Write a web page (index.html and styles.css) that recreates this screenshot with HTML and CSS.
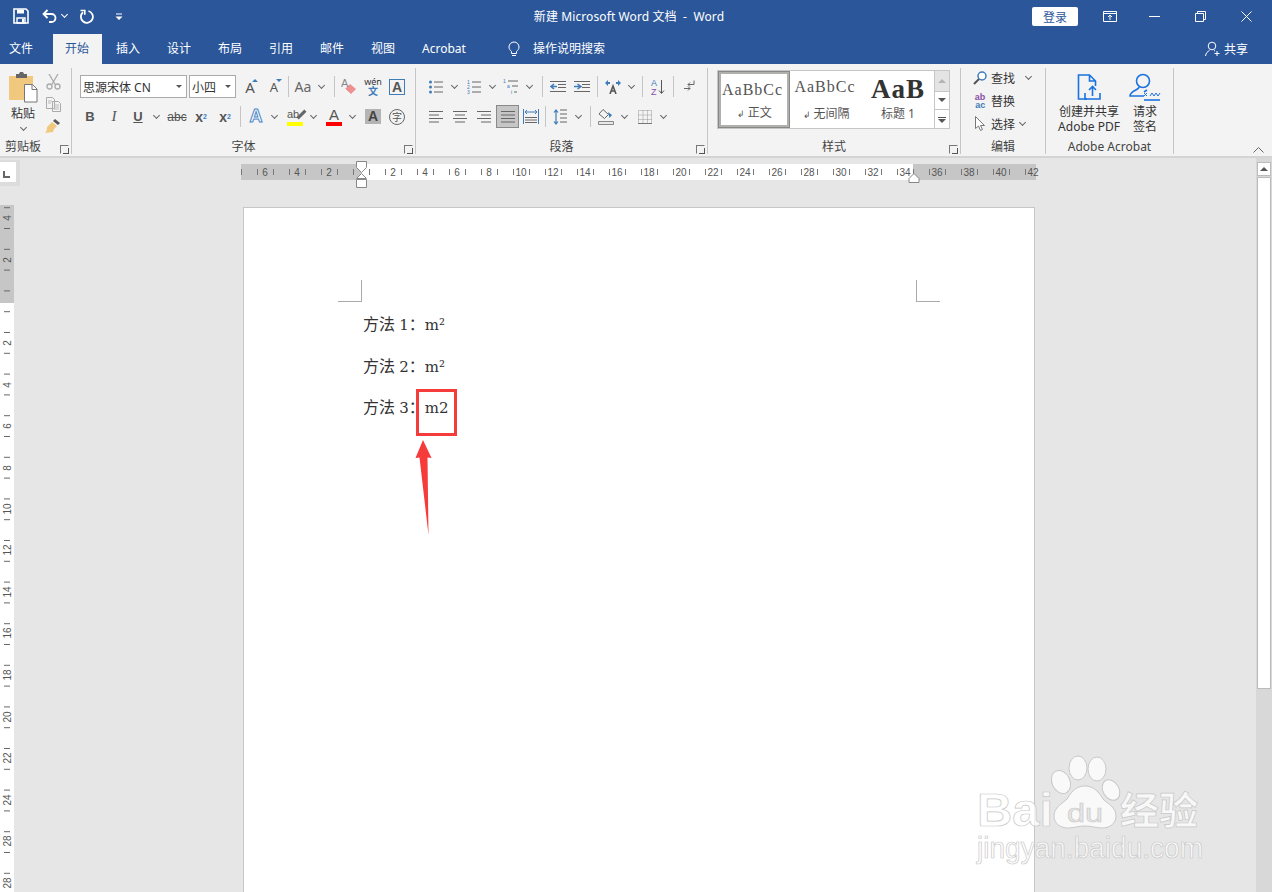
FILE: index.html
```html
<!DOCTYPE html>
<html lang="zh-CN">
<head>
  <meta charset="UTF-8">
  <title>新建 Microsoft Word 文档 - Word</title>
  <link rel="stylesheet" href="styles.css">
</head>
<body>
  <div class="titlebar">
    <div class="qat">
      <svg class="qat-save" width="16" height="16" viewBox="0 0 16 16"><path d="M1 1h12l2 2v12H1z" fill="none" stroke="#fff" stroke-width="1.6"/><path d="M4 1.5h7v4H4z" fill="#fff"/><path d="M4 10h8v5H4z" fill="none" stroke="#fff" stroke-width="1.4"/><path d="M9 11h2v3H9z" fill="#fff"/></svg>
      <svg class="qat-undo" width="16" height="14" viewBox="0 0 16 14"><path d="M5.5 1L1.5 5l4 4" fill="none" stroke="#fff" stroke-width="1.8"/><path d="M2 5h7.5a4 4 0 0 1 0 8H7" fill="none" stroke="#fff" stroke-width="1.8"/></svg>
      <span class="chev chev-white"></span>
      <svg class="qat-redo" width="15" height="15" viewBox="0 0 15 15"><path d="M4 3.2A6 6 0 1 0 9.5 2" fill="none" stroke="#fff" stroke-width="1.8"/><path d="M1.5 1.5h4.3v4.3" fill="none" stroke="#fff" stroke-width="1.6"/></svg>
      <svg class="qat-more" width="8" height="7" viewBox="0 0 8 7"><path d="M1 .5h6v1H1zM.5 3.5h7L4 7z" fill="#fff"/></svg>
    </div>
    <div class="doc-title">新建 Microsoft Word 文档 &nbsp;-&nbsp; Word</div>
    <div class="win-controls">
      <button class="login">登录</button>
      <svg class="win-ribbon" width="14" height="11" viewBox="0 0 14 11"><path d="M.5.5h13v10H.5zM.5 2.5h13" fill="none" stroke="#fff"/><path d="M7 9V4.5M5 6l2-2 2 2" fill="none" stroke="#fff"/></svg>
      <svg class="win-min" width="11" height="1" viewBox="0 0 11 1"><path d="M0 .5h11" stroke="#fff"/></svg>
      <svg class="win-restore" width="11" height="11" viewBox="0 0 11 11"><path d="M.5 2.5h8v8h-8zM2.5 2.5v-2h8v8h-2" fill="none" stroke="#fff"/></svg>
      <svg class="win-close" width="11" height="11" viewBox="0 0 11 11"><path d="M.5.5l10 10M10.5.5l-10 10" stroke="#fff" fill="none"/></svg>
    </div>
  </div>

  <div class="tabbar">
    <div class="tab tab-file">文件</div>
    <div class="tab tab-active">开始</div>
    <div class="tab">插入</div>
    <div class="tab">设计</div>
    <div class="tab">布局</div>
    <div class="tab">引用</div>
    <div class="tab">邮件</div>
    <div class="tab">视图</div>
    <div class="tab">Acrobat</div>
    <svg class="bulb" width="12" height="16" viewBox="0 0 12 16"><path d="M3.5 10.5C2 9 1 8 1 6a5 5 0 0 1 10 0c0 2-1 3-2.500 4.500v2h-5zM4 14.500h4" fill="none" stroke="#fff"/></svg>
    <div class="tab-search">操作说明搜索</div>
    <div class="share">
      <svg width="16" height="16" viewBox="0 0 16 16"><circle cx="7" cy="5" r="3.800" fill="none" stroke="#fff"/><path d="M.5 15c.5-3 2-4.500 4-5.500M9 9.500l1 .5M12 10v5M9.500 12.500h5" fill="none" stroke="#fff"/></svg>
      <span>共享</span>
    </div>
  </div>

  <div class="ribbon">
    <div class="group group-clip">
      <div class="clip-body">
        <div class="paste">
          <svg width="29" height="31" viewBox="0 0 29 31"><path d="M0 4h24v24H0z" fill="#f0c97f"/><path d="M7 2h3l1-2h3l1 2h3v4H7z" fill="#666"/><path d="M15.500 12.500h8l4.500 4.500v13H15.500z" fill="#fff" stroke="#777"/><path d="M23 12.500V17.500h5" fill="none" stroke="#777"/></svg>
          <span class="paste-label">粘贴</span>
          <span class="chev"></span>
        </div>
        <div class="clip-tools">
          <svg width="15" height="16" viewBox="0 0 15 16"><path d="M3 0l6.500 11M12 0L5.500 11" stroke="#aaa" stroke-width="1.300" fill="none"/><circle cx="3.500" cy="12.500" r="2.500" fill="none" stroke="#aaa" stroke-width="1.300"/><circle cx="11.500" cy="12.500" r="2.500" fill="none" stroke="#aaa" stroke-width="1.300"/></svg>
          <svg width="15" height="15" viewBox="0 0 15 15"><path d="M.5.500h6l2 2v9h-8zM6.500 4.500h6l2 2v8h-8z" fill="#f3f3f3" stroke="#aaa"/><path d="M2 4h4M2 6h3M8 8h5M8 10h5M8 12h5" stroke="#bbb"/></svg>
          <svg width="16" height="15" viewBox="0 0 16 15"><path d="M10 0l5 4-2 2-5-4z" fill="#555"/><path d="M7 3l5 4-3 3-1 3-8 1c2-2 2-4 2-6z" fill="#f0c97f"/></svg>
        </div>
      </div>
      <div class="group-label label-clip">剪贴板</div>
      <span class="launcher"></span>
    </div>

    <div class="group group-font">
      <div class="row">
        <div class="combo combo-font"><span>思源宋体 CN</span><i class="caret"></i></div>
        <div class="combo combo-size ml2"><span>小四</span><i class="caret"></i></div>
        <div class="tool ml2 big-a">A<i class="up"></i></div>
        <div class="tool small-a">A<i class="down"></i></div>
        <span class="sep ml2"></span>
        <div class="tool ml2 aa">Aa</div><span class="chev"></span>
        <span class="sep ml7"></span>
        <div class="tool ml2"><svg width="16" height="16" viewBox="0 0 16 16"><path d="M9 5l6 5-5 5-6-5z" fill="#ee8f92"/><path d="M4 10l5 5" stroke="#fff"/><text x="0" y="8" class="svg-a">A</text></svg></div>
        <div class="tool wen"><span>wén</span><b>文</b></div>
        <div class="tool"><span class="box-a">A</span></div>
      </div>
      <div class="row row-b">
        <div class="tool fmt fmt-b">B</div>
        <div class="tool fmt fmt-i">I</div>
        <div class="tool fmt fmt-u">U</div><span class="chev"></span>
        <div class="tool fmt fmt-abc ml3">abc</div>
        <div class="tool fmt fmt-x">x<sub>2</sub></div>
        <div class="tool fmt fmt-x">x<sup>2</sup></div>
        <span class="sep ml3"></span>
        <div class="tool ml3 fx-a">A</div><span class="chev"></span>
        <div class="tool ml3"><div class="bar-ico">ab<i class="pen"></i><i class="bar bar-yellow"></i></div></div><span class="chev"></span>
        <div class="tool ml3"><div class="bar-ico bar-a">A<i class="bar bar-red"></i></div></div><span class="chev"></span>
        <div class="tool ml3"><span class="shade-a">A</span></div>
        <div class="tool"><span class="circle-zi">字</span></div>
      </div>
      <div class="group-label">字体</div>
      <span class="launcher"></span>
    </div>

    <div class="group group-para">
      <div class="row">
        <div class="tool"><svg width="14" height="14" viewBox="0 0 14 14"><path d="M5 2h9M5 7h9M5 12h9" stroke="#666"/><circle cx="1.500" cy="2" r="1.500" fill="#3f7cb8"/><circle cx="1.500" cy="7" r="1.500" fill="#3f7cb8"/><circle cx="1.500" cy="12" r="1.500" fill="#3f7cb8"/></svg></div><span class="chev"></span>
        <div class="tool ml2"><svg width="14" height="14" viewBox="0 0 14 14"><path d="M5 2h9M5 7h9M5 12h9" stroke="#666"/><text x="0" y="4" class="svg-num">1</text><text x="0" y="9" class="svg-num">2</text><text x="0" y="14" class="svg-num">3</text></svg></div><span class="chev"></span>
        <div class="tool ml1"><svg width="16" height="16" viewBox="0 0 16 16"><path d="M5 2h10M9 7h6M11 13h3" stroke="#666"/><text x="0" y="4" class="svg-num">1</text><text x="4" y="9" class="svg-num">a</text><text x="8" y="15" class="svg-num">i</text></svg></div><span class="chev"></span>
        <span class="sep ml7"></span>
        <div class="tool ml3"><svg width="16" height="12" viewBox="0 0 16 12"><path d="M0 .5h16M8 3.500h8M8 6.500h8M0 10.500h16" stroke="#666"/><path d="M1 5.500h6M4 3L1 5.500 4 8" stroke="#3f7cb8" stroke-width="1.500" fill="none"/></svg></div>
        <div class="tool"><svg width="16" height="12" viewBox="0 0 16 12"><path d="M0 .5h16M8 3.500h8M8 6.500h8M0 10.500h16" stroke="#666"/><path d="M0 5.500h6M3.500 3L7 5.500 3.500 8" stroke="#3f7cb8" stroke-width="1.500" fill="none"/></svg></div>
        <span class="sep ml3"></span>
        <div class="tool ml3"><svg width="16" height="14" viewBox="0 0 16 14"><path d="M5 14L8 6l3 8M6 11h4" stroke="#555" stroke-width="1.600" fill="none"/><path d="M0 3l3-3v2h2v2H3v2zM16 3l-3-3v2h-2v2h2v2z" fill="#3f7cb8"/></svg></div><span class="chev"></span>
        <span class="sep ml5"></span>
        <div class="tool ml3"><svg width="14" height="16" viewBox="0 0 14 16"><text x="0" y="7" class="svg-sort svg-sort-a">A</text><text x="0" y="16" class="svg-sort svg-sort-z">Z</text><path d="M10.500 1v13M8 11.500l2.500 3 2.500-3" stroke="#555" fill="none"/></svg></div>
        <span class="sep ml3"></span>
        <div class="tool ml3"><svg width="11" height="13" viewBox="0 0 11 13"><path d="M10 .5v4H4M6 2.500l-2 2 2 2M0 8.500h6M4 6.500l2 2-2 2" stroke="#666" fill="none"/></svg></div>
      </div>
      <div class="row">
        <div class="tool"><svg class="lines" width="14" height="12" viewBox="0 0 14 12"><path d="M0 .5h14M0 4h10M0 7.500h14M0 11h10"/></svg></div>
        <div class="tool"><svg class="lines" width="14" height="12" viewBox="0 0 14 12"><path d="M0 .5h14M2 4h10M0 7.500h14M2 11h10"/></svg></div>
        <div class="tool"><svg class="lines" width="14" height="12" viewBox="0 0 14 12"><path d="M0 .5h14M4 4h10M0 7.500h14M4 11h10"/></svg></div>
        <div class="tool tool-on"><svg class="lines" width="14" height="12" viewBox="0 0 14 12"><path d="M0 .5h14M0 4h14M0 7.500h14M0 11h14"/></svg></div>
        <div class="tool"><svg width="16" height="15" viewBox="0 0 16 15"><path d="M.5 0v15M15.500 0v15" stroke="#3f7cb8"/><path d="M2 8.500h12M2 11h12M2 13.500h12" stroke="#666"/><path d="M2 3h12M4 1L2 3l2 2M12 1l2 2-2 2" stroke="#3f7cb8" fill="none"/></svg></div>
        <span class="sep ml2"></span>
        <div class="tool ml2"><svg width="14" height="16" viewBox="0 0 14 16"><path d="M7 1h7M7 5h7M7 9h7M7 13h7" stroke="#666"/><path d="M3 1v14M1 3.500L3 1l2 2.500M1 12.500L3 15l2-2.500" stroke="#3f7cb8" stroke-width="1.200" fill="none"/></svg></div><span class="chev"></span>
        <span class="sep ml6"></span>
        <div class="tool ml3"><svg width="16" height="16" viewBox="0 0 16 16"><path d="M5 .5l5.500 5-4 4L1 5z" fill="none" stroke="#666"/><path d="M10 3l4 3-2.500 3z" fill="#3f7cb8"/><path d="M.5 12.500h15v3H.5z" fill="#e8e8e8" stroke="#888"/></svg></div><span class="chev"></span>
        <div class="tool ml3"><svg width="14" height="14" viewBox="0 0 14 14"><path d="M.5.500h13v13H.5zM.5 5h13M.5 9.500h13M5 .5v13M9.500.5v13" fill="none" stroke="#999" stroke-dasharray="1 1"/><path d="M0 13.500h14" stroke="#777"/></svg></div><span class="chev"></span>
      </div>
      <div class="group-label">段落</div>
      <span class="launcher"></span>
    </div>

    <div class="group group-styles">
      <div class="gallery">
        <div class="style-item style-on"><div class="style-sample">AaBbCc</div><div class="style-name"><i>↲</i>正文</div></div>
        <div class="style-item"><div class="style-sample">AaBbCc</div><div class="style-name"><i>↲</i>无间隔</div></div>
        <div class="style-item style-head"><div class="style-sample">AaB</div><div class="style-name">标题 1</div></div>
        <div class="gallery-scroll">
          <span class="gs-btn gs-up"><i class="tri-up"></i></span>
          <span class="gs-btn"><i class="tri-down"></i></span>
          <span class="gs-btn gs-more"><i class="tri-down"></i></span>
        </div>
      </div>
      <div class="group-label">样式</div>
      <span class="launcher"></span>
    </div>

    <div class="group group-edit">
      <div class="edit-row">
        <div class="edit-ico"><svg width="14" height="14" viewBox="0 0 14 14"><circle cx="9" cy="5" r="4" fill="#fff" stroke="#3f7cb8" stroke-width="1.500"/><path d="M6 8l-5 5" stroke="#555" stroke-width="2"/></svg></div>
        <span>查找</span><span class="chev ml7"></span>
      </div>
      <div class="edit-row">
        <div class="edit-ico"><div class="ab-ac"><b>ab</b><b>ac</b></div></div>
        <span>替换</span>
      </div>
      <div class="edit-row">
        <div class="edit-ico"><svg width="10" height="15" viewBox="0 0 10 15"><path d="M.5.500v12l3-2.500 2 4.500 2-1-2-4h4z" fill="#fff" stroke="#777"/></svg></div>
        <span>选择</span><span class="chev ml1"></span>
      </div>
      <div class="group-label">编辑</div>
    </div>

    <div class="group group-acro">
      <div class="acro-body">
        <div class="acro-btn acro-pdf">
          <svg width="24" height="26" viewBox="0 0 24 26"><path d="M10 25H1.500V1h11l6 6v5M12.500 1v6h6" fill="none" stroke="#1a73e0" stroke-width="1.600"/><path d="M8 19v6h15v-6M15.500 22v-9M12 16l3.500-3.500L19 16" fill="none" stroke="#1a73e0" stroke-width="1.600"/></svg>
          <span>创建并共享</span><span>Adobe PDF</span>
        </div>
        <div class="acro-btn acro-sign">
          <svg width="33" height="28" viewBox="0 0 33 28"><circle cx="14" cy="8" r="6.500" fill="none" stroke="#1a73e0" stroke-width="1.600"/><path d="M10 14c0 3-9 4-9 9h14M15 19l3-2" fill="none" stroke="#1a73e0" stroke-width="1.600"/><path d="M15 27h16" stroke="#1a73e0" stroke-width="1.600"/><path d="M15 20l3 3M18 20l-3 3M21 23l2-3 2 3 2-3 2 3 2-3" stroke="#1a73e0" fill="none"/></svg>
          <span>请求</span><span>签名</span>
        </div>
      </div>
      <div class="group-label">Adobe Acrobat</div>
    </div>
    <svg class="collapse" width="11" height="6" viewBox="0 0 11 6"><path d="M.5 5.500l5-5 5 5" fill="none" stroke="#666"/></svg>
  </div>

  <div class="workspace">
    <div class="main">
      <div class="top-strip">
        <div class="corner"><span class="corner-mark"></span></div>
        <svg class="hruler" width="795" height="16" viewBox="0 0 795 16">
          <defs><pattern id="hticks" patternUnits="userSpaceOnUse" width="16" height="16"><path d="M.5 5v6" stroke="#777"/></pattern></defs>
          <rect width="795" height="16" fill="#c6c6c6"/>
          <rect x="120" width="552" height="16" fill="#fff"/>
          <rect width="795" height="16" fill="url(#hticks)"/>
          <g class="ruler-num">
            <text x="24" y="12">6</text><text x="56" y="12">4</text><text x="88" y="12">2</text>
            <text x="152" y="12">2</text><text x="184" y="12">4</text><text x="216" y="12">6</text><text x="248" y="12">8</text>
            <text x="280" y="12">10</text><text x="312" y="12">12</text><text x="344" y="12">14</text><text x="376" y="12">16</text>
            <text x="408" y="12">18</text><text x="440" y="12">20</text><text x="472" y="12">22</text><text x="504" y="12">24</text>
            <text x="536" y="12">26</text><text x="568" y="12">28</text><text x="600" y="12">30</text><text x="632" y="12">32</text>
            <text x="664" y="12">34</text><text x="696" y="12">36</text><text x="728" y="12">38</text><text x="760" y="12">40</text><text x="792" y="12">42</text>
          </g>
          <path d="M115.500-2.500h10v6l-5 5-5-5z" fill="#fff" stroke="#888"/>
          <path d="M120.500 9.500l5 5h-10z" fill="#fff" stroke="#888"/>
          <path d="M115.500 15.500h10v8h-10z" fill="#fff" stroke="#888"/>
          <path d="M673 9.500l5 5v4h-10v-4z" fill="#fff" stroke="#888"/>
        </svg>
      </div>
      <div class="doc-row">
        <svg class="vruler" width="14" height="687" viewBox="0 0 14 687">
          <defs><pattern id="vticks" patternUnits="userSpaceOnUse" width="14" height="20.800" y="23"><path d="M4 .5h6" stroke="#666"/></pattern></defs>
          <rect width="14" height="687" fill="#fff"/>
          <rect width="14" height="98" fill="#c6c6c6"/>
          <rect width="14" height="687" fill="url(#vticks)"/>
          <g class="ruler-num">
            <text transform="translate(10.500 13) rotate(-90)">4</text><text transform="translate(10.500 55) rotate(-90)">2</text>
            <text transform="translate(10.500 138) rotate(-90)">2</text><text transform="translate(10.500 180) rotate(-90)">4</text>
            <text transform="translate(10.500 221) rotate(-90)">6</text><text transform="translate(10.500 263) rotate(-90)">8</text>
            <text transform="translate(10.500 304) rotate(-90)">10</text><text transform="translate(10.500 345) rotate(-90)">12</text>
            <text transform="translate(10.500 387) rotate(-90)">14</text><text transform="translate(10.500 428) rotate(-90)">16</text>
            <text transform="translate(10.500 470) rotate(-90)">18</text><text transform="translate(10.500 512) rotate(-90)">20</text>
            <text transform="translate(10.500 553) rotate(-90)">22</text><text transform="translate(10.500 595) rotate(-90)">24</text>
            <text transform="translate(10.500 636) rotate(-90)">28</text><text transform="translate(10.500 678) rotate(-90)">28</text>
          </g>
        </svg>
        <div class="page">
          <div class="crop-row"><span class="crop crop-l"></span><span class="crop crop-r"></span></div>
          <p class="line">方法 <span class="num">1</span>：<span class="num">m²</span></p>
          <p class="line">方法 <span class="num">2</span>：<span class="num">m²</span></p>
          <p class="line">方法 <span class="num">3</span>：<span class="num">m2</span></p>
        </div>
      </div>
    </div>
    <div class="scrollbar">
      <span class="sb-btn"><i class="tri-up tri-dark"></i></span>
      <span class="sb-thumb"></span>
    </div>
  </div>

  <div class="callout"></div>
  <svg class="arrow" width="20" height="96" viewBox="0 0 20 96"><path d="M8 0l8.500 18-4-.5L13.500 95 4.500 17.500.5 18z" fill="#f63b3b"/></svg>

  <svg class="watermark" width="232" height="114" viewBox="0 0 232 114">
    <g class="wm-shape">
      <ellipse cx="103" cy="14" rx="9" ry="12"/><ellipse cx="122" cy="15" rx="9" ry="12"/>
      <ellipse cx="86" cy="28" rx="9" ry="12" transform="rotate(-25 86 28)"/><ellipse cx="136" cy="36" rx="8" ry="11" transform="rotate(-30 136 36)"/>
      <path d="M92 45c6-10 11-13 18-13s13 4 18 13c5 5 13 8 13 17 0 8-7 12-14 12-6 0-10-2-17-2s-11 2-17 2c-7 0-14-4-14-12 0-9 8-12 13-17z"/>
    </g>
    <text class="wm-text wm-bai" x="2" y="72" textLength="76" lengthAdjust="spacingAndGlyphs">Bai</text>
    <text class="wm-du" x="92" y="68" textLength="36" lengthAdjust="spacingAndGlyphs">du</text>
    <text class="wm-text wm-cn" x="145" y="70" textLength="78" lengthAdjust="spacingAndGlyphs">经验</text>
    <text class="wm-text wm-url" x="2" y="104" textLength="226" lengthAdjust="spacingAndGlyphs">jingyan.baidu.com</text>
  </svg>
</body>
</html>
```

FILE: styles.css
```css
* {
  margin: 0;
  padding: 0;
  box-sizing: border-box;
}

html, body {
  width: 1272px;
  height: 892px;
  overflow: hidden;
}

body {
  position: relative;
  display: flex;
  flex-direction: column;
  background: #e6e6e6;
  font-family: "Noto Sans", "Noto Sans CJK SC", sans-serif;
  font-size: 12px;
  color: #444;
}

.ml1 { margin-left: 1px; }
.ml2 { margin-left: 2px; }
.ml3 { margin-left: 3px; }
.ml5 { margin-left: 5px; }
.ml6 { margin-left: 6px; }
.ml7 { margin-left: 7px; }

/* title bar */
.titlebar {
  height: 32px;
  background: #2b579a;
  color: #fff;
  display: flex;
  align-items: center;
  flex: none;
}

.qat {
  width: 524px;
  display: flex;
  align-items: center;
  padding-left: 13px;
}

.qat-undo { margin-left: 13px; }
.qat-redo { margin-left: 9px; }
.qat-more { margin-left: 21px; }

.doc-title {
  width: 210px;
  text-align: center;
  white-space: nowrap;
  letter-spacing: .1px;
}

.win-controls {
  display: flex;
  align-items: center;
  margin-left: 298px;
}

.login {
  width: 46px;
  height: 19px;
  border: 0;
  border-radius: 2px;
  background: #fff;
  color: #2b579a;
  font: 12px "Noto Sans CJK SC", sans-serif;
}

.win-ribbon { margin-left: 25px; }
.win-min { margin-left: 32px; }
.win-restore { margin-left: 35px; }
.win-close { margin-left: 35px; }

/* tabs */
.tabbar {
  height: 32px;
  background: #2b579a;
  color: #fff;
  display: flex;
  align-items: flex-end;
  flex: none;
}

.tab {
  height: 30px;
  width: 51px;
  padding-left: 12px;
  line-height: 30px;
  white-space: nowrap;
}

.tab-file {
  width: 53px;
  padding-left: 9px;
}

.tab-active {
  width: 49px;
  margin-right: 2px;
  background: #f3f3f3;
  color: #2b579a;
}

.bulb {
  margin: 0 0 7px 47px;
}

.tab-search {
  margin-left: 13px;
  height: 30px;
  line-height: 30px;
}

.share {
  margin-left: auto;
  padding-right: 24px;
  height: 30px;
  display: flex;
  align-items: center;
  gap: 3px;
}

/* ribbon */
.ribbon {
  position: relative;
  height: 94px;
  background: #f3f3f3;
  border-bottom: 2px solid #d4d4d4;
  display: flex;
  flex: none;
}

.group {
  position: relative;
  height: 86px;
  margin-top: 4px;
  border-right: 1px solid #c6c6c6;
  display: flex;
  flex-direction: column;
}

.group-label {
  position: absolute;
  left: 0;
  right: 0;
  bottom: 0;
  height: 14px;
  line-height: 14px;
  text-align: center;
}

.label-clip {
  right: auto;
  left: 5px;
}

.launcher {
  position: absolute;
  right: 2px;
  bottom: 0;
  width: 9px;
  height: 9px;
  border: 1px solid #777;
  border-right-color: transparent;
  border-bottom-color: transparent;
}

.launcher::after {
  content: "";
  position: absolute;
  right: -1px;
  bottom: -1px;
  width: 5px;
  height: 5px;
  border-right: 1px solid #555;
  border-bottom: 1px solid #555;
}

.group-clip { width: 72px; }
.group-font { width: 344px; padding: 7px 0 0 8px; }
.group-para { width: 292px; padding: 7px 0 0 8px; }
.group-styles { width: 253px; padding: 2px 0 0 9px; }
.group-edit { width: 85px; padding: 0 0 0 8px; }
.group-acro { width: 128px; padding: 0 0 0 5px; }

.row {
  display: flex;
  align-items: center;
  height: 23px;
  margin-bottom: 7px;
}

.row-b {
  margin-left: -2px;
}

.tool {
  position: relative;
  width: 24px;
  height: 23px;
  flex: none;
  display: flex;
  align-items: center;
  justify-content: center;
}

.tool-on {
  background: #c6c6c6;
  border: 1px solid #8a8a8a;
  width: 23px;
}

.sep {
  width: 1px;
  height: 21px;
  background: #c6c6c6;
  flex: none;
}

.chev {
  position: relative;
  width: 12px;
  height: 10px;
  flex: none;
  display: inline-block;
}

.chev::before {
  content: "";
  position: absolute;
  left: 4px;
  top: 1px;
  width: 4px;
  height: 4px;
  border-right: 1px solid #666;
  border-bottom: 1px solid #666;
  transform: rotate(45deg);
}

.chev-white::before {
  border-color: #fff;
}

.combo {
  height: 23px;
  background: #fff;
  border: 1px solid #ababab;
  display: flex;
  align-items: center;
  justify-content: space-between;
  padding: 0 4px 0 2px;
  color: #333;
  flex: none;
}

.combo-font { width: 107px; }
.combo-size { width: 47px; }

.caret {
  width: 0;
  height: 0;
  border: 3px solid transparent;
  border-top: 3px solid #555;
  border-bottom: 0;
}

.big-a { font-size: 15px; color: #555; }
.small-a { font-size: 13px; color: #555; }

.up, .down {
  position: absolute;
  right: 4px;
  top: 4px;
  border: 3px solid transparent;
  border-top: 0;
  border-bottom: 3px solid #3f7cb8;
}

.down {
  border-bottom: 0;
  border-top: 3px solid #3f7cb8;
}

.aa { font-size: 14px; color: #666; }

.svg-a {
  font: 11px "Liberation Sans", sans-serif;
  fill: #888;
}

.wen {
  flex-direction: column;
  line-height: 9px;
  font-size: 9px;
  color: #333;
}

.wen b {
  font-size: 10px;
  line-height: 11px;
  color: #3f7cb8;
}

.box-a {
  width: 16px;
  height: 16px;
  border: 1px solid #3f7cb8;
  font: 700 14px/14px "Liberation Sans", sans-serif;
  color: #555;
  text-align: center;
}

.fmt {
  font-family: "Liberation Sans", sans-serif;
  font-weight: 700;
  color: #555;
  font-size: 13px;
}

.fmt-i {
  font-family: "Liberation Serif", serif;
  font-style: italic;
  font-weight: 400;
  font-size: 15px;
}

.fmt-u { text-decoration: underline; }
.fmt-abc { text-decoration: line-through; font-weight: 400; font-size: 12px; }
.fmt-x { font-size: 14px; }

.fmt-x sub, .fmt-x sup {
  font-size: 7px;
  color: #3f7cb8;
  line-height: 0;
}

.fx-a {
  font: 700 18px "Liberation Sans", sans-serif;
  color: #fff;
  -webkit-text-stroke: 1px #4a86c5;
}

.bar-ico {
  position: relative;
  width: 16px;
  height: 18px;
  font: 11px/13px "Liberation Sans", sans-serif;
  color: #555;
}

.pen {
  position: absolute;
  right: 0;
  top: 1px;
  width: 3px;
  height: 11px;
  background: #666;
  transform: rotate(45deg);
}

.bar-a {
  font-size: 15px;
  text-align: center;
}

.bar {
  position: absolute;
  left: 0;
  right: 0;
  bottom: 0;
  height: 4px;
}

.bar-yellow { background: #ffff00; }
.bar-red { background: #ff0000; }

.shade-a {
  width: 16px;
  height: 15px;
  background: #b4b4b4;
  font: 700 14px/15px "Liberation Sans", sans-serif;
  color: #444;
  text-align: center;
}

.circle-zi {
  width: 16px;
  height: 16px;
  border: 1px solid #666;
  border-radius: 50%;
  font-size: 10px;
  line-height: 14px;
  text-align: center;
  color: #555;
}

.svg-num {
  font: 5px "Liberation Sans", sans-serif;
  fill: #3f7cb8;
}

.svg-sort { font: 9px "Liberation Sans", sans-serif; }
.svg-sort-a { fill: #3f7cb8; }
.svg-sort-z { fill: #8a4fa8; }

.lines path {
  stroke: #666;
  fill: none;
}

/* clipboard */
.clip-body {
  display: flex;
  padding: 4px 0 0 9px;
}

.paste {
  width: 28px;
  display: flex;
  flex-direction: column;
  align-items: center;
}

.paste-label {
  margin-top: 3px;
  line-height: 16px;
  white-space: nowrap;
  color: #333;
}

.paste .chev { margin-top: 2px; }

.clip-tools {
  margin: 2px 0 0 8px;
  height: 60px;
  display: flex;
  flex-direction: column;
  justify-content: space-between;
  align-items: center;
}

/* styles gallery */
.gallery {
  width: 233px;
  height: 59px;
  background: #fff;
  border: 1px solid #c6c6c6;
  display: flex;
}

.style-item {
  width: 72px;
  overflow: hidden;
  text-align: center;
  color: #555;
}

.style-on {
  width: 73px;
  border: 3px solid #b0b0ac;
  outline: 1px solid #888;
  outline-offset: -1px;
}

.style-sample {
  font: 16px/32px "Liberation Serif", serif;
  letter-spacing: 1px;
  white-space: nowrap;
  height: 35px;
  margin-left: 4px;
  text-align: left;
}

.style-on .style-sample {
  height: 31px;
  margin-left: 1px;
  line-height: 32px;
}

.style-head {
  width: 73px;
}

.style-head .style-sample {
  font-weight: 700;
  font-size: 27px;
  line-height: 36px;
  text-align: center;
  margin: 0;
  color: #333;
}

.style-name {
  line-height: 16px;
}

.style-name i {
  font-style: normal;
  font-size: 9px;
  margin-right: 3px;
}

.gallery-scroll {
  margin-left: auto;
  width: 15px;
  display: flex;
  flex-direction: column;
  border-left: 1px solid #c6c6c6;
}

.gs-btn {
  flex: 1;
  display: flex;
  align-items: center;
  justify-content: center;
  border-bottom: 1px solid #c6c6c6;
}

.gs-up { background: #e4e4e4; flex: 1.100; }
.gs-btn:last-child { border-bottom: 0; }

.gs-more i {
  position: relative;
  margin-top: 3px;
}

.gs-more i::before {
  content: "";
  position: absolute;
  left: -4px;
  top: -6px;
  width: 8px;
  height: 1px;
  background: #555;
}

.tri-up, .tri-down {
  width: 0;
  height: 0;
  border: 4px solid transparent;
}

.tri-up {
  border-top: 0;
  border-bottom: 4px solid #b4b4b4;
}

.tri-dark { border-bottom-color: #555; }

.tri-down {
  border-bottom: 0;
  border-top: 4px solid #555;
}

/* editing */
.edit-row {
  display: flex;
  align-items: center;
  height: 23px;
  white-space: nowrap;
  color: #333;
}

.edit-row:first-child { margin-top: -2px; }

.edit-ico {
  width: 22px;
  display: flex;
  justify-content: center;
}

.ab-ac {
  display: flex;
  flex-direction: column;
  font: 700 9px/8px "Liberation Sans", sans-serif;
  color: #8a4fa8;
  text-align: right;
}

.ab-ac b + b { color: #3f7cb8; }

/* acrobat */
.acro-body {
  display: flex;
  padding-top: 5px;
}

.acro-btn {
  display: flex;
  flex-direction: column;
  align-items: center;
  line-height: 15px;
  white-space: nowrap;
  color: #333;
}

.acro-btn svg {
  height: 28px;
  margin-bottom: 3px;
}

.acro-pdf { width: 76px; }
.acro-sign { width: 36px; }

.collapse {
  position: absolute;
  left: 1253px;
  top: 83px;
}

/* work area */
.workspace {
  flex: 1;
  display: flex;
  min-height: 0;
}

.main {
  width: 1256px;
  display: flex;
  flex-direction: column;
}

.top-strip {
  height: 47px;
  display: flex;
  align-items: flex-start;
}

.corner {
  width: 20px;
  height: 26px;
  margin-top: 2px;
  padding: 2px 4px 4px 0;
  background: #dcdcdc;
}

.corner-mark {
  display: block;
  height: 20px;
  background: #fff;
  position: relative;
}

.corner-mark::before {
  content: "";
  position: absolute;
  left: 3px;
  top: 9px;
  width: 5px;
  height: 5px;
  border-left: 2px solid #666;
  border-bottom: 2px solid #666;
}

.hruler {
  margin: 6px 0 0 221px;
  overflow: visible;
}

.ruler-num text {
  font: 10px "Liberation Sans", sans-serif;
  fill: #555;
  text-anchor: middle;
}

.doc-row {
  flex: 1;
  display: flex;
  min-height: 0;
}

.vruler { flex: none; }

.page {
  width: 792px;
  margin: 2px 0 0 229px;
  background: #fff;
  border: 1px solid #c6c6c6;
  border-bottom: 0;
  padding: 72px 94px 0;
}

.crop-row {
  display: flex;
  justify-content: space-between;
  margin-bottom: 2px;
}

.crop {
  width: 24px;
  height: 22px;
  border-bottom: 1px solid #aaa;
}

.crop-l { border-right: 1px solid #aaa; }
.crop-r { border-left: 1px solid #aaa; }

.line {
  padding-left: 25px;
  height: 41.500px;
  line-height: 41.500px;
  font-size: 16px;
  color: #333;
}

.num {
  font-family: "DejaVu Serif", serif;
  font-size: 15px;
}

.scrollbar {
  width: 16px;
  background: #d8d8d8;
  display: flex;
  flex-direction: column;
  align-items: center;
  padding-top: 4px;
}

.sb-btn {
  width: 14px;
  height: 14px;
  background: #fff;
  border: 1px solid #bbb;
  display: flex;
  align-items: center;
  justify-content: center;
}

.sb-thumb {
  width: 14px;
  height: 512px;
  margin-top: 1px;
  background: #fff;
  border: 1px solid #bbb;
}

/* red annotation and watermark over the page */
.callout {
  position: absolute;
  left: 416px;
  top: 389px;
  width: 41px;
  height: 47px;
  border: 3px solid #f63b3b;
}

.arrow {
  position: absolute;
  left: 415px;
  top: 440px;
}

.watermark {
  position: absolute;
  left: 975px;
  top: 754px;
  overflow: visible;
}

.wm-shape > * {
  fill: rgba(255, 255, 255, .75);
  stroke: #c8c8c8;
}

.wm-text {
  font-family: "Liberation Sans", "Noto Sans CJK SC", sans-serif;
  fill: rgba(255, 255, 255, .75);
  stroke: #c8c8c8;
  stroke-width: .7px;
}

.wm-bai { font-size: 46px; font-weight: 700; }
.wm-cn { font-size: 38px; font-weight: 700; font-family: "Noto Sans CJK SC", sans-serif; }
.wm-url { font-size: 29px; }

.wm-du {
  font: 26px "Liberation Sans", sans-serif;
  fill: #e6e6e6;
  stroke: #c8c8c8;
  stroke-width: .6px;
}
```
